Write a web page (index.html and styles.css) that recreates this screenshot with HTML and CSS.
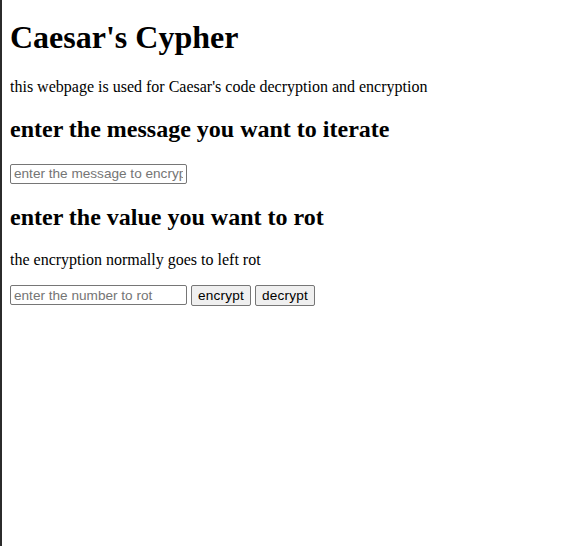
FILE: index.html
```html
<!DOCTYPE html>
<html>
<head>
<meta charset="utf-8">
<title>Caesar's Cypher</title>
<link rel="stylesheet" href="styles.css">
</head>
<body>
<h1 class="title">Caesar's Cypher</h1>
<p class="desc">this webpage is used for Caesar's code decryption and encryption</p>
<h2 class="heading">enter the message you want to iterate</h2>
<input class="field field-first" type="text" placeholder="enter the message to encrypt">
<h2 class="heading">enter the value you want to rot</h2>
<p class="desc">the encryption normally goes to left rot</p>
<div class="row">
<input class="field" type="text" placeholder="enter the number to rot">
<button class="btn">encrypt</button>
<button class="btn">decrypt</button>
</div>
</body>
</html>
```
FILE: styles.css
```css
html {
  border-left: 2px solid #2b2b2b;
  min-height: 100%;
  box-sizing: border-box;
  background: #fff;
}
body {
  margin: 8px;
  font-family: "Liberation Serif", "Times New Roman", serif;
  font-size: 16px;
  color: #000;
}
.title {
  font-size: 32px;
  font-weight: bold;
  margin: 11.44px 0 21.44px;
}
.heading {
  font-size: 24px;
  font-weight: bold;
  margin: 19.92px 0;
}
.desc {
  margin: 16px 0;
}
.field {
  font-family: "Liberation Sans", Arial, sans-serif;
  font-size: 13.6px;
  width: 177px;
  height: 20px;
  box-sizing: border-box;
  padding: 1px 3px;
  border: 1px solid #767676;
  border-radius: 2px;
  margin: 0;
}
.field-first {
  margin-top: 1px;
}
.field::placeholder {
  color: #757575;
}
.row {
  display: flex;
  align-items: center;
  gap: 4px;
}
.btn {
  font-family: "Liberation Sans", Arial, sans-serif;
  font-size: 13.6px;
  letter-spacing: 0.2px;
  height: 21px;
  margin: 0;
  padding: 1px 6px;
  border: 1px solid #767676;
  border-radius: 2px;
  background: #efefef;
  color: #000;
}
```
